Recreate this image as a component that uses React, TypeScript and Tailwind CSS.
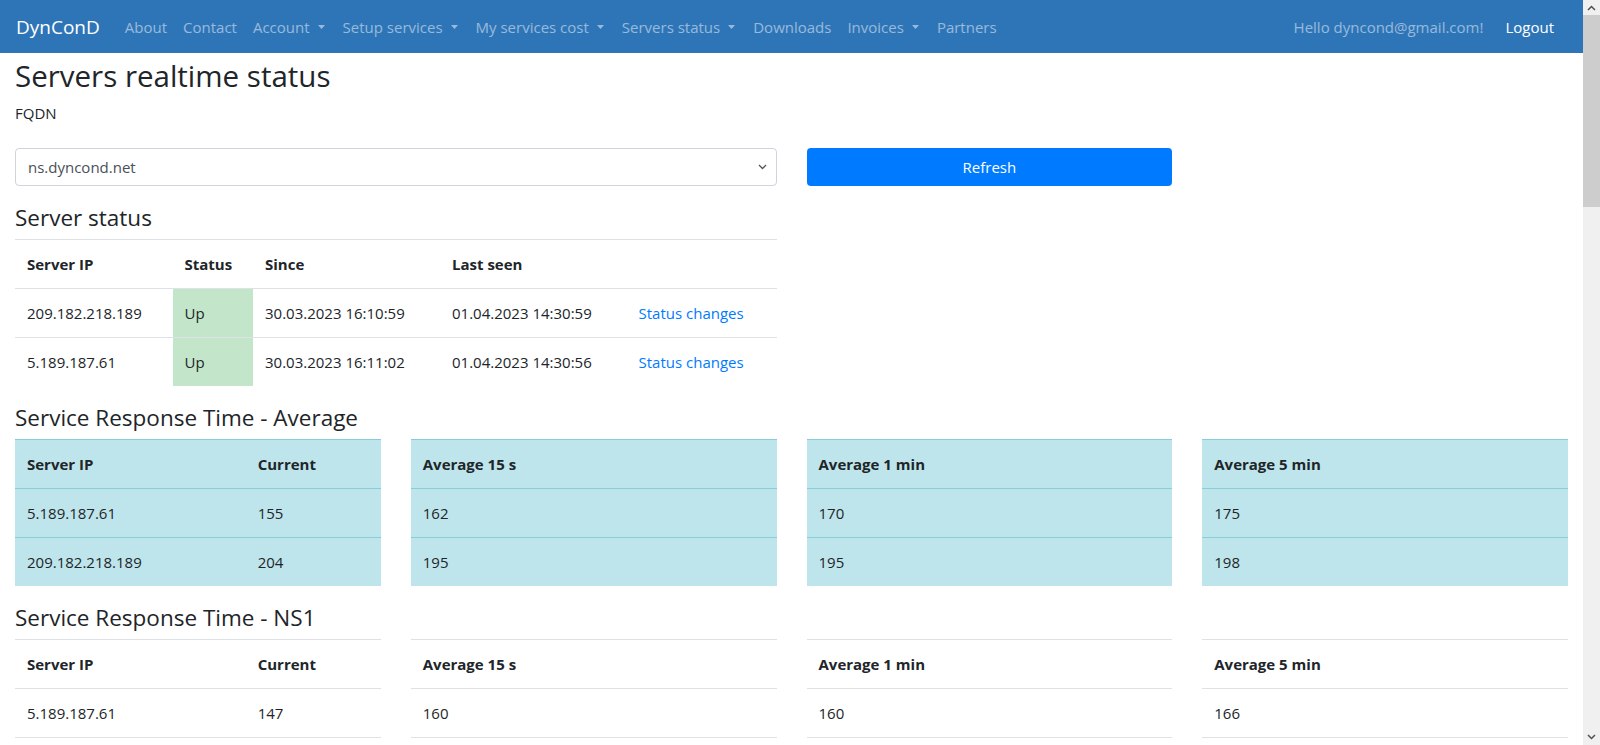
import React from "react";

const Caret = () => (
  <svg width="7" height="4" viewBox="0 0 7 4" className="ml-[8px] mr-[2px] inline-block">
    <path d="M0 0 H7 L3.5 4 Z" fill="currentColor" />
  </svg>
);

const NavLink = ({ label, dd }: { label: string; dd?: boolean }) => (
  <span className="flex items-center px-2 text-white/50 leading-6">
    {label}
    {dd && <Caret />}
  </span>
);

const cell = "px-3 py-3 leading-6 text-left align-top";

function StatusTable() {
  const rows = [
    ["209.182.218.189", "30.03.2023 16:10:59", "01.04.2023 14:30:59"],
    ["5.189.187.61", "30.03.2023 16:11:02", "01.04.2023 14:30:56"],
  ];
  return (
    <table className="w-full table-fixed border-collapse text-[15px] text-[#212529]">
      <colgroup>
        <col className="w-[157.5px]" />
        <col className="w-[80.5px]" />
        <col className="w-[187px]" />
        <col className="w-[186.5px]" />
        <col />
      </colgroup>
      <tbody>
        <tr className="border-t border-[#dee2e6]">
          <th className={`${cell} font-bold`}>Server IP</th>
          <th className={`${cell} font-bold`}>Status</th>
          <th className={`${cell} font-bold`}>Since</th>
          <th className={`${cell} font-bold`}>Last seen</th>
          <th className={cell}></th>
        </tr>
        {rows.map((r) => (
          <tr key={r[0]} className="border-t border-[#dee2e6]">
            <td className={cell}>{r[0]}</td>
            <td className={`${cell} bg-[#c3e6cb]`}>Up</td>
            <td className={cell}>{r[1]}</td>
            <td className={cell}>{r[2]}</td>
            <td className={`${cell} text-[#007bff]`}>Status changes</td>
          </tr>
        ))}
      </tbody>
    </table>
  );
}

function DataTable({
  headers,
  rows,
  info,
  firstWidth,
}: {
  headers: string[];
  rows: string[][];
  info?: boolean;
  firstWidth?: boolean;
}) {
  const border = info ? "border-[#86cfda]" : "border-[#dee2e6]";
  return (
    <table
      className={`w-full table-fixed border-collapse text-[15px] text-[#212529] ${
        info ? "bg-[#bee5eb]" : ""
      }`}
    >
      {firstWidth && (
        <colgroup>
          <col className="w-[230.7px]" />
          <col />
        </colgroup>
      )}
      <tbody>
        <tr className={`border-t ${border}`}>
          {headers.map((h) => (
            <th key={h} className={`${cell} font-bold`}>
              {h}
            </th>
          ))}
        </tr>
        {rows.map((r, i) => (
          <tr
            key={i}
            className={`border-t ${border} ${!info && i === rows.length - 1 ? "border-b" : ""}`}
          >
            {r.map((c, j) => (
              <td key={j} className={cell}>
                {c}
              </td>
            ))}
          </tr>
        ))}
      </tbody>
    </table>
  );
}

const heading =
  "text-[22.5px] leading-[29px] font-normal text-[#212529] mt-[17px] mb-[7px]";

export default function App() {
  return (
    <div className="flex h-[745px] w-[1600px] overflow-hidden bg-white font-['Open_Sans',sans-serif] text-[#212529]">
      <div className="flex-1 min-w-0">
        {/* Navbar */}
        <nav className="flex h-[53px] items-center bg-[#2e75b8] pl-4 pr-[29px] text-[15px]">
          <span className="mr-[17px] text-[19px] leading-[30px] text-white">DynConD</span>
          <NavLink label="About" />
          <NavLink label="Contact" />
          <NavLink label="Account" dd />
          <NavLink label="Setup services" dd />
          <NavLink label="My services cost" dd />
          <NavLink label="Servers status" dd />
          <NavLink label="Downloads" />
          <NavLink label="Invoices" dd />
          <NavLink label="Partners" />
          <span className="ml-auto leading-6 text-white/50">Hello dyncond@gmail.com!</span>
          <span className="ml-[22px] leading-6 text-white">Logout</span>
        </nav>

        <main className="px-[15px]">
          <h1 className="mt-[5px] text-[29.5px] leading-[36px] font-normal">
            Servers realtime status
          </h1>
          <div className="mt-[7px] text-[15px] leading-6">FQDN</div>

          <div className="mt-[23px] grid grid-cols-4 gap-x-[30px]">
            <div className="col-span-2 flex h-[38px] items-center justify-between rounded-[4px] border border-[#ced4da] pl-3 pr-[9px] text-[15px] text-[#495057]">
              <span>ns.dyncond.net</span>
              <svg width="9" height="6" viewBox="0 0 9 6">
                <path d="M1 1 L4.5 4.5 L8 1" fill="none" stroke="#555" strokeWidth="1.3" />
              </svg>
            </div>
            <div className="flex h-[38px] items-center justify-center rounded-[4px] bg-[#007bff] text-[15px] text-white">
              Refresh
            </div>
          </div>

          <h4 className={heading}>Server status</h4>
          <div className="grid grid-cols-4 gap-x-[30px]">
            <div className="col-span-2">
              <StatusTable />
            </div>
          </div>

          <h4 className={heading}>Service Response Time - Average</h4>
          <div className="grid grid-cols-4 gap-x-[30px]">
            <DataTable
              info
              firstWidth
              headers={["Server IP", "Current"]}
              rows={[
                ["5.189.187.61", "155"],
                ["209.182.218.189", "204"],
              ]}
            />
            <DataTable info headers={["Average 15 s"]} rows={[["162"], ["195"]]} />
            <DataTable info headers={["Average 1 min"]} rows={[["170"], ["195"]]} />
            <DataTable info headers={["Average 5 min"]} rows={[["175"], ["198"]]} />
          </div>

          <h4 className={heading}>Service Response Time - NS1</h4>
          <div className="grid grid-cols-4 gap-x-[30px]">
            <DataTable
              firstWidth
              headers={["Server IP", "Current"]}
              rows={[["5.189.187.61", "147"]]}
            />
            <DataTable headers={["Average 15 s"]} rows={[["160"]]} />
            <DataTable headers={["Average 1 min"]} rows={[["160"]]} />
            <DataTable headers={["Average 5 min"]} rows={[["166"]]} />
          </div>
        </main>
      </div>

      {/* Scrollbar */}
      <div className="flex w-[17px] shrink-0 flex-col bg-[#f0f0f0]">
        <div className="flex h-[15px] items-center justify-center">
          <svg width="9" height="6" viewBox="0 0 9 6">
            <path d="M1 5 L4.5 1.5 L8 5" fill="none" stroke="#505050" strokeWidth="1.5" />
          </svg>
        </div>
        <div className="h-[192px] bg-[#cdcdcd]" />
        <div className="flex-1" />
        <div className="flex h-[17px] items-center justify-center">
          <svg width="9" height="6" viewBox="0 0 9 6">
            <path d="M1 1 L4.5 4.5 L8 1" fill="none" stroke="#505050" strokeWidth="1.5" />
          </svg>
        </div>
      </div>
    </div>
  );
}
